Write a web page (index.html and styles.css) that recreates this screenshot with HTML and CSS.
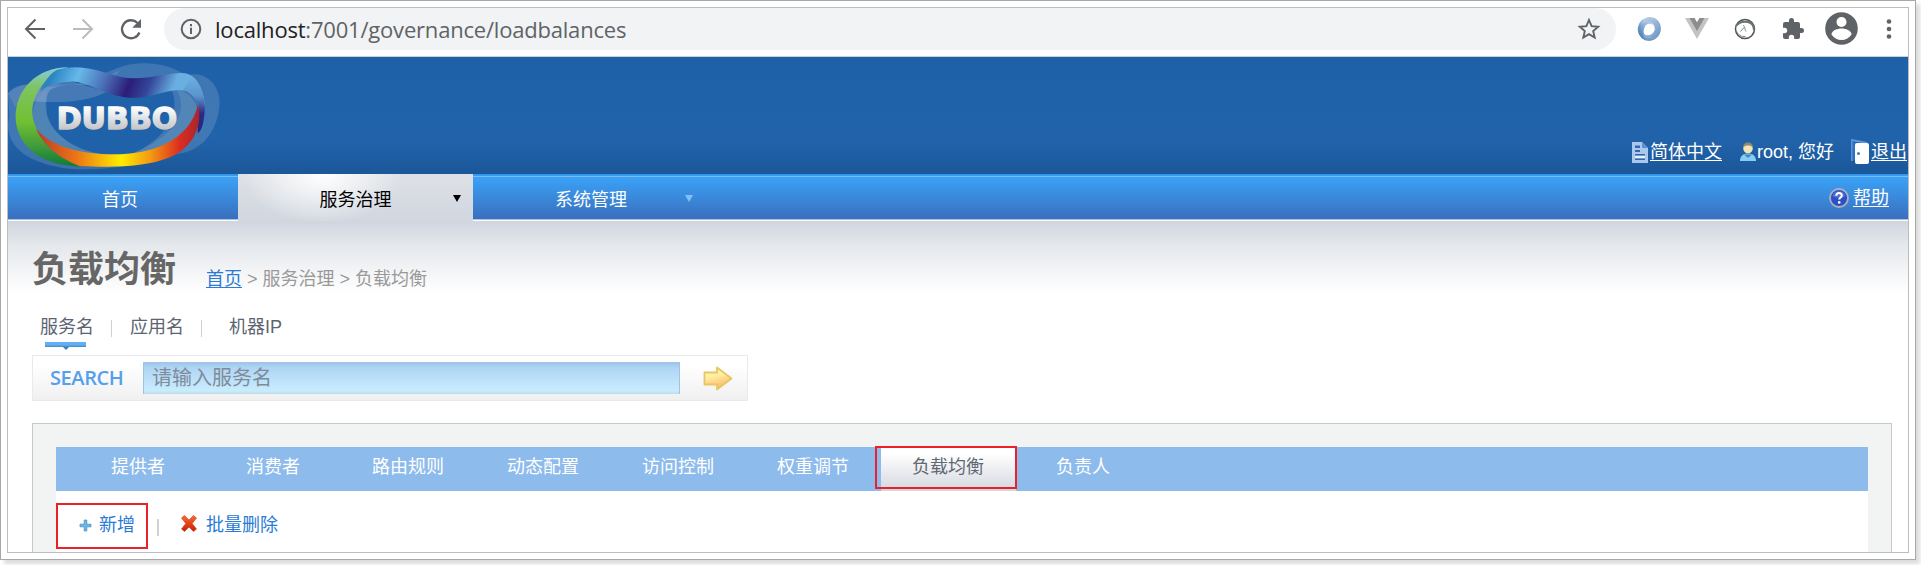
FILE: index.html
```html
<!DOCTYPE html>
<html lang="zh-CN">
<head>
<meta charset="utf-8">
<title>Dubbo</title>
<link rel="stylesheet" href="styles.css">
</head>
<body>
<div class="frame">
<div class="window">
  <div class="toolbar">
    <svg class="ic back" width="24" height="24" viewBox="0 0 24 24" fill="none" stroke="#5f6368" stroke-width="2"><path d="M22 12H3.500M12.500 2.500 3 12l9.500 9.500"/></svg>
    <svg class="ic forward" width="24" height="24" viewBox="0 0 24 24" fill="none" stroke="#bbbcbe" stroke-width="2"><path d="M2 12h18.500M11.500 2.500 21 12l-9.500 9.500"/></svg>
    <svg class="ic reload" width="24" height="24" viewBox="0 0 24 24"><path d="M20.400 15.500A9 9 0 1 1 18.500 6" fill="none" stroke="#5f6368" stroke-width="2.300"/><path d="M22 2v8.800h-8.800z" fill="#5f6368"/></svg>
    <div class="address">
      <svg width="22" height="22" viewBox="0 0 22 22"><circle cx="11" cy="11" r="9.300" fill="none" stroke="#5f6368" stroke-width="2"/><path d="M10 9.800h2V16h-2zM10 6h2v2.200h-2z" fill="#5f6368"/></svg>
      <span class="url"><b>localhost</b>:7001/governance/loadbalances</span>
      <svg class="star" width="24" height="24" viewBox="0 0 24 24"><path d="M12 3l2.600 6.100 6.600.6-5 4.400 1.500 6.500L12 17.200l-5.700 3.400 1.500-6.500-5-4.400 6.600-.6z" fill="none" stroke="#5f6368" stroke-width="1.900"/></svg>
    </div>
    <svg class="ext-json" width="24" height="24" viewBox="0 0 24 24">
      <defs><linearGradient id="j1" x1="0" y1="1" x2="1" y2="0"><stop offset="0" stop-color="#2f66a5"/><stop offset=".5" stop-color="#8fb2d8"/><stop offset="1" stop-color="#dbe7f3"/></linearGradient><linearGradient id="j2" x1="0" y1="0" x2="1" y2="1"><stop offset="0" stop-color="#c9dcee"/><stop offset="1" stop-color="#3f74b0"/></linearGradient></defs>
      <path d="M13 .2A12 12 0 0 0 8 23.200c3 .8 6 .5 8-1C9 22 5.500 17 7 12c1-4 4-5.500 7-5 3 .6 4 3 3.500 5.500C19.500 7 17 3 13 .2z" fill="url(#j1)"/>
      <path d="M11 .1c9-.8 13 6 12.900 11.500C24 18 19 23.500 12.500 23.900 8 23 6 20 6.500 16c1.500 2.500 5 2.800 7.500 1.500 4-2 5-7 2.500-10.500C14 4 9 4 5 7 6 3 8 1 11 .1z" fill="url(#j2)" opacity=".85"/>
      <ellipse cx="11.800" cy="12" rx="4" ry="5.300" fill="#fff"/>
    </svg>
    <svg class="ext-vue" width="24" height="22" viewBox="0 0 24 22"><path d="M0 0h9.500L12 4.500 14.500 0H24L12 21z" fill="#c3c3c3"/><path d="M4.500 0h5L12 4.500 14.500 0h5L12 13z" fill="#8d8d8d"/></svg>
    <svg class="ext-ring" width="22" height="22" viewBox="0 0 22 22" fill="none"><circle cx="11" cy="11" r="9.500" stroke="#4b5653" stroke-width="1.500"/><path d="M2 8c3-4 7-5 12-4 4 1 6 4 6 8" stroke="#69736f" stroke-width="2"/><path d="M2.500 13c1.500 4 5 6 9 5.500M9 7.500c2 0 1.500 4 3 6M6.500 13.500l3.500-4" stroke="#7b8581" stroke-width="1"/></svg>
    <svg class="ext-puzzle" width="24" height="24" viewBox="0 0 24 24"><path d="M20.500 11H19V7a2 2 0 0 0-2-2h-4V3.500a2.500 2.500 0 0 0-5 0V5H4a2 2 0 0 0-2 2v3.800h1.500a2.700 2.700 0 0 1 0 5.400H2V20a2 2 0 0 0 2 2h3.800v-1.500a2.700 2.700 0 0 1 5.400 0V22H17a2 2 0 0 0 2-2v-4h1.500a2.500 2.500 0 0 0 0-5z" fill="#5f6368"/></svg>
    <svg class="avatar" width="33" height="33" viewBox="0 0 33 33"><circle cx="16.500" cy="16.500" r="16.300" fill="#5f6368"/><circle cx="16.500" cy="10" r="5" fill="#fff"/><path d="M6.500 22.500c0-4 6-6 10-6s10 2 10 6c-2.200 3.500-5.700 5.500-10 5.500s-7.800-2-10-5.500z" fill="#fff"/></svg>
    <svg class="dots" width="6" height="22" viewBox="0 0 6 22" fill="#5f6368"><circle cx="3" cy="3.500" r="2.300"/><circle cx="3" cy="11" r="2.300"/><circle cx="3" cy="18.500" r="2.300"/></svg>
  </div>

  <div class="header">
    <svg class="logo" width="214" height="117" viewBox="24 21 642 351">
      <defs>
        <linearGradient id="gLeft" x1="0" y1="0" x2="0" y2="1"><stop offset="0" stop-color="#86cbe0"/><stop offset=".2" stop-color="#7fc463"/><stop offset=".55" stop-color="#72bf32"/><stop offset=".8" stop-color="#3e9a3c"/><stop offset="1" stop-color="#0f7a37"/></linearGradient>
        <linearGradient id="gTop" x1="0" y1="0" x2="1" y2=".1"><stop offset="0" stop-color="#2878b8"/><stop offset=".1" stop-color="#2d86c4"/><stop offset=".25" stop-color="#66b9e9"/><stop offset=".42" stop-color="#4b70b8"/><stop offset=".58" stop-color="#2b1d78"/><stop offset=".7" stop-color="#33479a"/><stop offset=".85" stop-color="#68aee0"/><stop offset="1" stop-color="#6cafdf"/></linearGradient>
        <linearGradient id="gRight" x1="0" y1="0" x2="0" y2="1"><stop offset="0" stop-color="#6bb0e0"/><stop offset=".35" stop-color="#5b94ce"/><stop offset=".65" stop-color="#2d2a86"/><stop offset="1" stop-color="#25247b"/></linearGradient>
        <linearGradient id="gBot" x1="0" y1="0" x2="1" y2="0"><stop offset="0" stop-color="#b83a2c"/><stop offset=".25" stop-color="#ec7616"/><stop offset=".52" stop-color="#ffec00"/><stop offset=".7" stop-color="#f39a12"/><stop offset=".88" stop-color="#dc2d20"/><stop offset="1" stop-color="#a8252c"/></linearGradient>
        <linearGradient id="gText" gradientUnits="userSpaceOnUse" x1="0" y1="172" x2="0" y2="238"><stop offset="0" stop-color="#fff"/><stop offset="1" stop-color="#c3c5c9"/></linearGradient>
      </defs>
      <path d="M24 130C60 80 130 120 200 110C300 90 350 35 440 40C500 42 530 60 560 76C620 60 665 110 658 170C650 250 600 310 520 312C430 350 250 370 170 350C60 330 10 270 28 200z" fill="#b9cfdb" opacity=".2"/>
      <path d="M24 130C60 95 120 95 190 104C280 104 310 85 360 60C320 120 280 155 200 157C130 158 70 150 45 170z" fill="#9fb3d8" opacity=".22"/>
      <path d="M150 120C230 75 400 140 510 112C550 180 500 270 390 314C260 330 150 260 140 190C138 150 140 130 150 120z" fill="#1f62aa"/>
      <path d="M97 150C120 158 250 165 320 125L200 90C150 95 110 110 97 150z" fill="#9fb3d8" opacity=".3"/>
      <path d="M530 121C560 170 550 250 390 314C500 310 580 260 595 190C590 150 560 120 530 121z" fill="#7fa9bf" opacity=".3"/>
      <path d="M140 120C120 200 170 290 300 312C190 320 110 270 98 200C98 170 110 140 140 120z" fill="#7fa9bf" opacity=".25"/>
      <path d="M205 52C110 52 45 120 47 205C50 280 110 345 240 350C180 310 100 260 97 190C95 130 140 75 205 52z" fill="url(#gLeft)"/>
      <path d="M170 60C240 38 300 65 360 80C430 95 480 70 545 69C590 68 612 120 615 170C600 135 570 118 530 121C480 124 440 152 370 141C300 130 250 85 200 96C160 100 135 110 120 127C130 100 145 75 170 60z" fill="url(#gTop)"/>
      <path d="M575 78C610 105 622 165 610 215C606 235 600 245 593 250L596 165C585 140 565 124 550 120z" fill="url(#gRight)"/>
      <path d="M108 236C160 295 250 312 340 313C440 314 570 280 594 162C612 250 560 300 510 322C430 355 320 352 240 348C190 330 130 290 108 236z" fill="url(#gBot)"/>
      <text x="173" y="239" class="logo-shadow" textLength="362" lengthAdjust="spacingAndGlyphs">DUBBO</text>
      <text x="170" y="236" class="logo-text" fill="url(#gText)" stroke="url(#gText)" textLength="362" lengthAdjust="spacingAndGlyphs">DUBBO</text>
    </svg>
    <div class="user">
      <svg width="16" height="21" viewBox="0 0 16 21"><path d="M0 0h10l6 6v15H0z" fill="#a9c8ec"/><path d="M10 0l6 6h-6z" fill="#5b8fd0"/><path d="M3 3.500h5v2.500H3zM3 8h5v2H3zM3 12h10v1.500H3zM3 16.500h10v1.500H3z" fill="#3468ae"/><path d="M3 14h10v2H3z" fill="#e6f1fc"/></svg>
      <a class="lang">简体中文</a>
      <svg class="person" width="18" height="20" viewBox="0 0 18 20"><path d="M1 19c0-5 3-7.500 8-7.500s8 2.500 8 7.500z" fill="#86cdf5"/><path d="M5 12.500h8L9 16z" fill="#4d83bd"/><circle cx="9" cy="6.500" r="4.800" fill="#f4e3b5"/><path d="M4 6C4 2 6 .5 9 .5S14 2 14 6c-1-2-3-2.500-5-2.500S5 4 4 6z" fill="#8d8973"/></svg>
      <span class="hello">root, 您好</span>
      <svg class="door" width="19" height="26" viewBox="0 0 19 26"><path d="M1 22V1l15 3" fill="none" stroke="#5a9be6" stroke-width="1.800"/><path d="M1.500 20V2l4 2v19z" fill="#2f6fbd"/><rect x="4" y="4" width="14" height="21" rx="2" fill="#fff"/><circle cx="7.500" cy="14.500" r="1.500" fill="#3f7fc9"/></svg>
      <a>退出</a>
    </div>
  </div>

  <div class="nav">
    <div class="nav-item home">首页</div>
    <div class="nav-item active">服务治理<i class="caret"></i></div>
    <div class="nav-item">系统管理<i class="caret"></i></div>
    <div class="help">
      <svg width="20" height="20" viewBox="0 0 20 20"><circle cx="10" cy="10" r="9" fill="#2d4fc4" stroke="#aab1bd" stroke-width="1.800"/><path d="M3.500 8a6.800 6.800 0 0 1 13 0c-4 2-9 2-13 0z" fill="#6f8ae0" opacity=".6"/><path d="M7.300 7.800c0-3.800 5.600-3.600 5.500-.3 0 2-2.600 2-2.600 4" fill="none" stroke="#fff" stroke-width="2"/><circle cx="10.200" cy="14.400" r="1.300" fill="#fff"/></svg>
      <a>帮助</a>
    </div>
  </div>

  <div class="page">
    <div class="title-row">
      <h1>负载均衡</h1>
      <div class="crumbs"><a>首页</a><span class="gt">&gt;</span>服务治理<span class="gt">&gt;</span>负载均衡</div>
    </div>
    <div class="kinds">
      <span class="kind on">服务名</span><i class="bar"></i><span class="kind">应用名</span><i class="bar"></i><span class="kind last">机器IP</span>
    </div>
    <div class="search">
      <span class="search-label">SEARCH</span>
      <div class="search-input">请输入服务名</div>
      <svg class="go" width="30" height="25" viewBox="0 0 30 25"><defs><linearGradient id="go" x1="0" y1="0" x2=".3" y2="1"><stop offset="0" stop-color="#fff6c0"/><stop offset=".45" stop-color="#ffef9f"/><stop offset="1" stop-color="#ffb56c"/></linearGradient></defs><path d="M1.500 6.500H14V1.500L28.500 12.500 14 23.500V18.500H1.500z" fill="url(#go)" stroke="#e6c764" stroke-width="1.800" stroke-linejoin="round"/></svg>
    </div>
    <div class="panel">
      <div class="tabs">
        <span class="tab">提供者</span><span class="tab">消费者</span><span class="tab">路由规则</span><span class="tab">动态配置</span><span class="tab">访问控制</span><span class="tab">权重调节</span><span class="tab selected">负载均衡<i class="mark-tab"></i></span><span class="tab">负责人</span>
      </div>
      <div class="actions">
        <div class="add">
          <svg width="13" height="13" viewBox="0 0 13 13"><path d="M5.200 1h2.600v4.200H12v2.600H7.800V12H5.200V7.800H1V5.200h4.200z" fill="#63b7ea" stroke="#4c94c8" stroke-width=".8"/></svg>
          <span>新增</span>
        </div>
        <i class="sep"></i>
        <svg class="cross" width="16" height="17" viewBox="0 0 16 17"><defs><linearGradient id="x" x1="0" y1="0" x2="0" y2="1"><stop offset="0" stop-color="#ff6a2c"/><stop offset="1" stop-color="#c81e04"/></linearGradient></defs><path d="M.5 3 3.500.5 8 5 12.500.5 15.500 3 11.200 8.500 15.500 14 12.500 16.500 8 12 3.500 16.500.5 14 4.800 8.500z" fill="url(#x)" stroke="#c0391b" stroke-width=".6"/></svg>
        <span class="del">批量删除</span>
      </div>
    </div>
  </div>
</div>
</div>
</body>
</html>
```
FILE: styles.css
```css
* { box-sizing: border-box; }
body {
  margin: 0;
  height: 565px;
  overflow: hidden;
  background: #fff;
  font: 18px/24px "Liberation Sans", "Noto Sans CJK SC", sans-serif;
  color: #666;
}
i { font-style: normal; }
svg { flex: none; display: block; }
.frame {
  width: 1916px;
  height: 560px;
  padding: 6px;
  border: 1px solid #a8a8a8;
  background: #fff;
  box-shadow: 4px 4px 4px #dcdcdc;
}
.window {
  width: 1902px;
  height: 546px;
  border: 1px solid #bdbdbd;
  overflow: hidden;
}

.toolbar {
  display: flex;
  align-items: center;
  height: 49px;
  padding: 0 0 7px 15px;
  border-bottom: 1px solid #d0d0d0;
}
.forward { margin-left: 24px; }
.reload { margin-left: 24px; }
.address {
  display: flex;
  align-items: center;
  width: 1452px;
  height: 42px;
  margin-left: 21px;
  padding: 0 15px 0 16px;
  border-radius: 21px;
  background: #f1f3f4;
}
.url {
  margin-left: 13px;
  font: 22px/30px "Open Sans", "Noto Sans", sans-serif;
  letter-spacing: -0.2px;
  color: #5f6368;
  white-space: nowrap;
}
.url b { font-weight: 400; color: #202124; }
.star { margin-left: auto; }
.ext-json { margin-left: 21px; }
.ext-vue { margin-left: 24px; }
.ext-ring { margin-left: 25px; }
.ext-puzzle { margin-left: 25px; }
.avatar { margin-left: 20px; }
.dots { margin-left: 28px; }

.header {
  display: flex;
  justify-content: space-between;
  height: 117px;
  background: linear-gradient(#1f61a8, #2163aa 70%, #1b5799);
}
.logo-text, .logo-shadow {
  font: bold 88px "DejaVu Sans", sans-serif;
  stroke-width: 4;
  stroke-linejoin: round;
}
.logo-shadow { fill: #35506f; opacity: .45; }
.user {
  display: flex;
  align-items: center;
  align-self: flex-end;
  height: 24px;
  margin-bottom: 10px;
  color: #fff;
  white-space: nowrap;
}
.user a, .help a { text-decoration: underline; text-underline-offset: 2px; text-decoration-thickness: 1px; }
.user a { margin-left: 2px; }
.user a:last-child { margin: 0 1px 0 1px; }
.person { margin-left: 17px; }
.door { margin-left: 16px; }
.hello { width: 78px; }

.nav {
  display: flex;
  height: 47px;
  background:
    linear-gradient(#2f93e6 0 1px, #3a9cf0 1px 2px, #78bdf8 2px 3px, transparent 3px 45px, #a9c3e6 45px 46px, #fff 46px),
    linear-gradient(#3aa0f5 10%, #3a6fbe 95%);
  color: #fff;
}
.nav-item {
  position: relative;
  width: 236px;
  padding-top: 14px;
  text-align: center;
}
.nav-item.home { width: 230px; padding-right: 6px; }
.nav-item.active {
  width: 235px;
  color: #000;
  background:
    radial-gradient(ellipse 80px 50px at 84px 0, #fff, rgba(255, 255, 255, 0)),
    linear-gradient(#dee1e5, #d0d7e0);
}
.caret {
  position: absolute;
  right: 12px;
  top: 21px;
  border: 4px solid transparent;
  border-top: 7px solid #000;
  border-bottom: 0;
}
.nav-item:not(.active) .caret { right: 16px; border-top-color: #82c0f8; }
.help {
  display: flex;
  align-items: center;
  gap: 4px;
  height: 47px;
  margin: 0 19px 0 auto;
}

.page {
  height: 332px;
  padding: 0 16px 0 24px;
  background: linear-gradient(#d0d5de, #e5e8ec 25px, #fff 72px);
}
.title-row { display: flex; height: 91px; }
h1 {
  width: 174px;
  margin: 0;
  padding-top: 23px;
  font: bold 36px/44px "Noto Sans CJK SC", sans-serif;
}
.crumbs { padding-top: 46px; color: #999; white-space: nowrap; }
.crumbs a { color: #2a7bd6; text-decoration: underline; text-underline-offset: 2px; text-decoration-thickness: 1px; }
.gt { padding: 0 5px; }
.kinds {
  display: flex;
  align-items: flex-start;
  height: 43px;
  padding: 3px 0 0 8px;
}
.kind { position: relative; color: #5b6470; }
.kind.last { margin-left: 9px; }
.bar { width: 1px; height: 17px; margin: 5px 18px 0 17px; background: #cfcfd6; }
.kind.on::before {
  content: "";
  position: absolute;
  left: 5px;
  top: 27px;
  width: 41px;
  height: 5px;
  background: linear-gradient(#62b0f3 60%, #4585bd);
}
.kind.on::after {
  content: "";
  position: absolute;
  left: 23px;
  top: 32px;
  border: 3px solid transparent;
  border-top-color: #3c7db7;
  border-bottom: 0;
}
.search {
  display: flex;
  align-items: center;
  width: 716px;
  height: 46px;
  padding-left: 17px;
  border: 1px solid #e8eaed;
  background: linear-gradient(#fff 20%, #f0f0f0);
}
.search-label {
  width: 93px;
  font: 600 20px/24px "Open Sans", sans-serif;
  letter-spacing: -0.4px;
  color: #559fee;
  white-space: nowrap;
}
.search-input {
  width: 537px;
  height: 32px;
  padding-left: 8px;
  border: 0 solid #9dc5e2;
  border-width: 0 1px;
  background: linear-gradient(#9fc3e6, #b0d6f5 20%, #c9ecfe 90%, #bcdce8);
  font-size: 20px;
  line-height: 33px;
  color: #808b99;
}
.go { margin-left: 23px; }

.panel {
  height: 140px;
  margin-top: 22px;
  padding: 23px 23px 0;
  border: 1px solid #c8c8c8;
  background: #f2f4f4;
}
.tabs {
  display: flex;
  height: 44px;
  padding-left: 15px;
  background: #8dbbec;
  color: #fff;
}
.tab {
  position: relative;
  width: 135px;
  padding: 8px 1px 0 0;
  text-align: center;
}
.tab.selected { color: #606873; background: linear-gradient(#fff 15%, #d3d7df); }
.mark-tab {
  position: absolute;
  left: -6px;
  top: -1px;
  width: 142px;
  height: 43px;
  border: 2px solid #ec2028;
}
.actions {
  display: flex;
  align-items: flex-start;
  height: 80px;
  padding-top: 12px;
  background: #fff;
  color: #2a7bd6;
}
.add {
  display: flex;
  align-items: center;
  gap: 7px;
  width: 92px;
  height: 46px;
  padding: 0 0 2px 21px;
  border: 2px solid #ec2028;
}
.sep { width: 2px; height: 17px; margin: 16px 22px 0 9px; background: #d2d2d2; }
.cross { margin-top: 12px; }
.del { margin: 10px 0 0 9px; }
```
